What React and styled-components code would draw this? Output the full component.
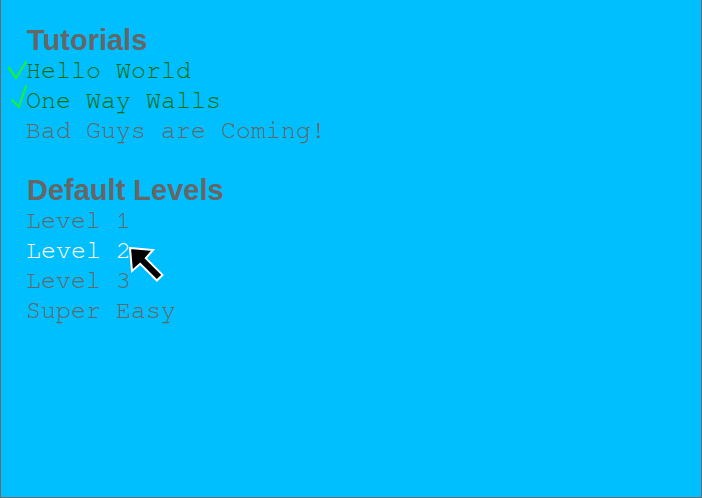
import React from 'react';
import styled, { createGlobalStyle } from 'styled-components';

const GlobalStyle = createGlobalStyle`
  html, body {
    margin: 0;
    padding: 0;
    background: #00bfff;
  }
`;

const sections = [
  {
    title: 'Tutorials',
    items: [
      { name: 'Hello World', done: true, check: '3,13 10,23 20,7' },
      { name: 'One Way Walls', done: true, check: '6,15 13,22 20,1' },
      { name: 'Bad Guys are Coming!' },
    ],
  },
  {
    title: 'Default Levels',
    items: [
      { name: 'Level 1' },
      { name: 'Level 2', hover: true },
      { name: 'Level 3' },
      { name: 'Super Easy' },
    ],
  },
];

export default function App() {
  return (
    <Screen>
      <GlobalStyle />
      {sections.map((s) => (
        <Section key={s.title}>
          <Heading>{s.title}</Heading>
          {s.items.map((item) => (
            <Item key={item.name} $done={item.done} $hover={item.hover}>
              {item.done && (
                <Check viewBox="0 0 24 30" width="24" height="30">
                  <polyline points={item.check} fill="none" stroke="#19f03a" strokeWidth="2.2" strokeLinecap="round" strokeLinejoin="round" />
                </Check>
              )}
              {item.name}
            </Item>
          ))}
        </Section>
      ))}
      <Cursor viewBox="-2 -2 38 38" width="38" height="38">
        <path
          d="M0,0 L23,2 L15.8,10.2 L32.5,26.9 L26.9,32.5 L10.2,15.8 L2,23 Z"
          fill="#000"
          stroke="#fff"
          strokeWidth="2"
          strokeLinejoin="miter"
        />
      </Cursor>
    </Screen>
  );
}

const Screen = styled.div`
  position: relative;
  box-sizing: border-box;
  width: 702px;
  height: 498px;
  background: #00bfff;
  border: 1px solid #6a6a6a;
  border-top: none;
  padding: 25px 0 0 25px;
  display: flex;
  flex-direction: column;
  gap: 30px;
  overflow: hidden;
`;

const Section = styled.div`
  display: flex;
  flex-direction: column;
`;

const Heading = styled.div`
  font-family: 'Liberation Sans', Arial, sans-serif;
  font-weight: 700;
  font-size: 29px;
  line-height: 30px;
  height: 30px;
  padding-left: 1px;
  color: #666666;
`;

const Item = styled.div`
  position: relative;
  box-sizing: border-box;
  font-family: 'Nimbus Mono PS', 'Nimbus Mono L', FreeMono, 'Courier 10 Pitch', Courier, 'Liberation Mono', monospace;
  font-size: 25px;
  line-height: 30px;
  height: 30px;
  padding-top: 1px;
  white-space: pre;
  color: ${(p) => (p.$hover ? '#ffffff' : p.$done ? '#0b6b0b' : '#666666')};
`;

const Check = styled.svg`
  position: absolute;
  left: -20px;
  top: 0;
`;

const Cursor = styled.svg`
  position: absolute;
  left: 127px;
  top: 246px;
`;
